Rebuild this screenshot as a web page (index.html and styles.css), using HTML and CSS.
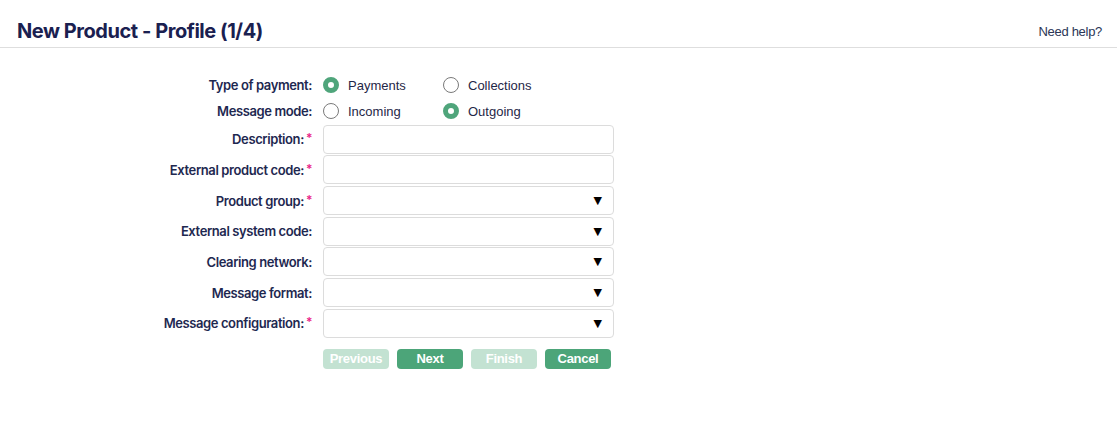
FILE: index.html
```html
<!DOCTYPE html>
<html>
<head>
<meta charset="utf-8">
<link rel="stylesheet" href="styles.css">
</head>
<body>
<header class="header">
  <h1 class="title">New Product - Profile (1/4)</h1>
  <a class="help" href="#">Need help?</a>
</header>
<form class="form">
  <div class="row radio-row">
    <label class="label">Type of payment:</label>
    <div class="options">
      <span class="option"><span class="radio checked"></span>Payments</span>
      <span class="option"><span class="radio"></span>Collections</span>
    </div>
  </div>
  <div class="row radio-row">
    <label class="label">Message mode:</label>
    <div class="options">
      <span class="option"><span class="radio"></span>Incoming</span>
      <span class="option"><span class="radio checked"></span>Outgoing</span>
    </div>
  </div>
  <div class="row">
    <label class="label">Description:<span class="req">*</span></label>
    <div class="field"></div>
  </div>
  <div class="row">
    <label class="label">External product code:<span class="req">*</span></label>
    <div class="field"></div>
  </div>
  <div class="row">
    <label class="label">Product group:<span class="req">*</span></label>
    <div class="field select"><span class="arrow">▼</span></div>
  </div>
  <div class="row">
    <label class="label">External system code:</label>
    <div class="field select"><span class="arrow">▼</span></div>
  </div>
  <div class="row">
    <label class="label">Clearing network:</label>
    <div class="field select"><span class="arrow">▼</span></div>
  </div>
  <div class="row">
    <label class="label">Message format:</label>
    <div class="field select"><span class="arrow">▼</span></div>
  </div>
  <div class="row">
    <label class="label">Message configuration:<span class="req">*</span></label>
    <div class="field select"><span class="arrow">▼</span></div>
  </div>
  <div class="buttons">
    <span class="btn disabled">Previous</span>
    <span class="btn">Next</span>
    <span class="btn disabled">Finish</span>
    <span class="btn">Cancel</span>
  </div>
</form>
</body>
</html>
```
FILE: styles.css
```css
* { box-sizing: border-box; }
body {
  margin: 0;
  background: #fff;
  font-family: Inter, "Liberation Sans", sans-serif;
  color: #1d2548;
}
.header {
  height: 48px;
  border-bottom: 1px solid #dedede;
  display: flex;
  align-items: flex-end;
  justify-content: space-between;
  padding: 0 15px 5px 17px;
}
.title {
  margin: 0;
  font-size: 20px;
  font-weight: 700;
  color: #1a2050;
  letter-spacing: -0.45px;
  line-height: 24px;
  position: relative;
  top: 1px;
}
.help {
  font-family: "Liberation Sans", Arial, sans-serif;
  font-size: 13px;
  color: #2b3656;
  text-decoration: none;
  letter-spacing: -0.3px;
  line-height: 16px;
  margin-bottom: 2px;
}
.form {
  margin-top: 24px;
  display: flex;
  flex-direction: column;
}
.row {
  display: grid;
  grid-template-columns: 312px 291px;
  column-gap: 11px;
  align-items: center;
  height: 30.67px;
}
.radio-row { height: 26px; }
.label {
  text-align: right;
  font-size: 13px;
  font-weight: 600;
  color: #1e2850;
  letter-spacing: -0.4px;
  white-space: nowrap;
}
.req {
  color: #ea1f8a;
  font-size: 12px;
  margin-left: 2px;
  position: relative;
  top: -2px;
}
.options {
  display: grid;
  grid-template-columns: 120px 120px;
  font-family: "Liberation Sans", Arial, sans-serif;
  font-size: 13px;
  color: #1f2747;
}
.option {
  display: flex;
  align-items: center;
  gap: 9px;
}
.radio {
  width: 16px;
  height: 16px;
  border-radius: 50%;
  border: 1px solid #7a7a7a;
  background: #fff;
  flex: none;
}
.radio.checked {
  border: 5.5px solid #4fa57b;
  background: #fff;
}
.field {
  height: 29px;
  border: 1px solid #dcdcdc;
  border-radius: 4px;
  background: #fff;
  display: flex;
  align-items: center;
  justify-content: flex-end;
  padding-right: 11px;
}
.arrow {
  font-size: 11px;
  color: #000;
  font-family: "DejaVu Sans", sans-serif;
}
.buttons {
  display: flex;
  gap: 8px;
  margin-left: 323px;
  margin-top: 10px;
}
.btn {
  width: 66px;
  height: 20px;
  border-radius: 4px;
  background: #4ca579;
  color: #fff;
  font-family: "Liberation Sans", Arial, sans-serif;
  font-weight: 700;
  font-size: 13px;
  display: flex;
  align-items: center;
  justify-content: center;
  letter-spacing: -0.3px;
}
.btn.disabled { background: #c3e2d2; }
```
